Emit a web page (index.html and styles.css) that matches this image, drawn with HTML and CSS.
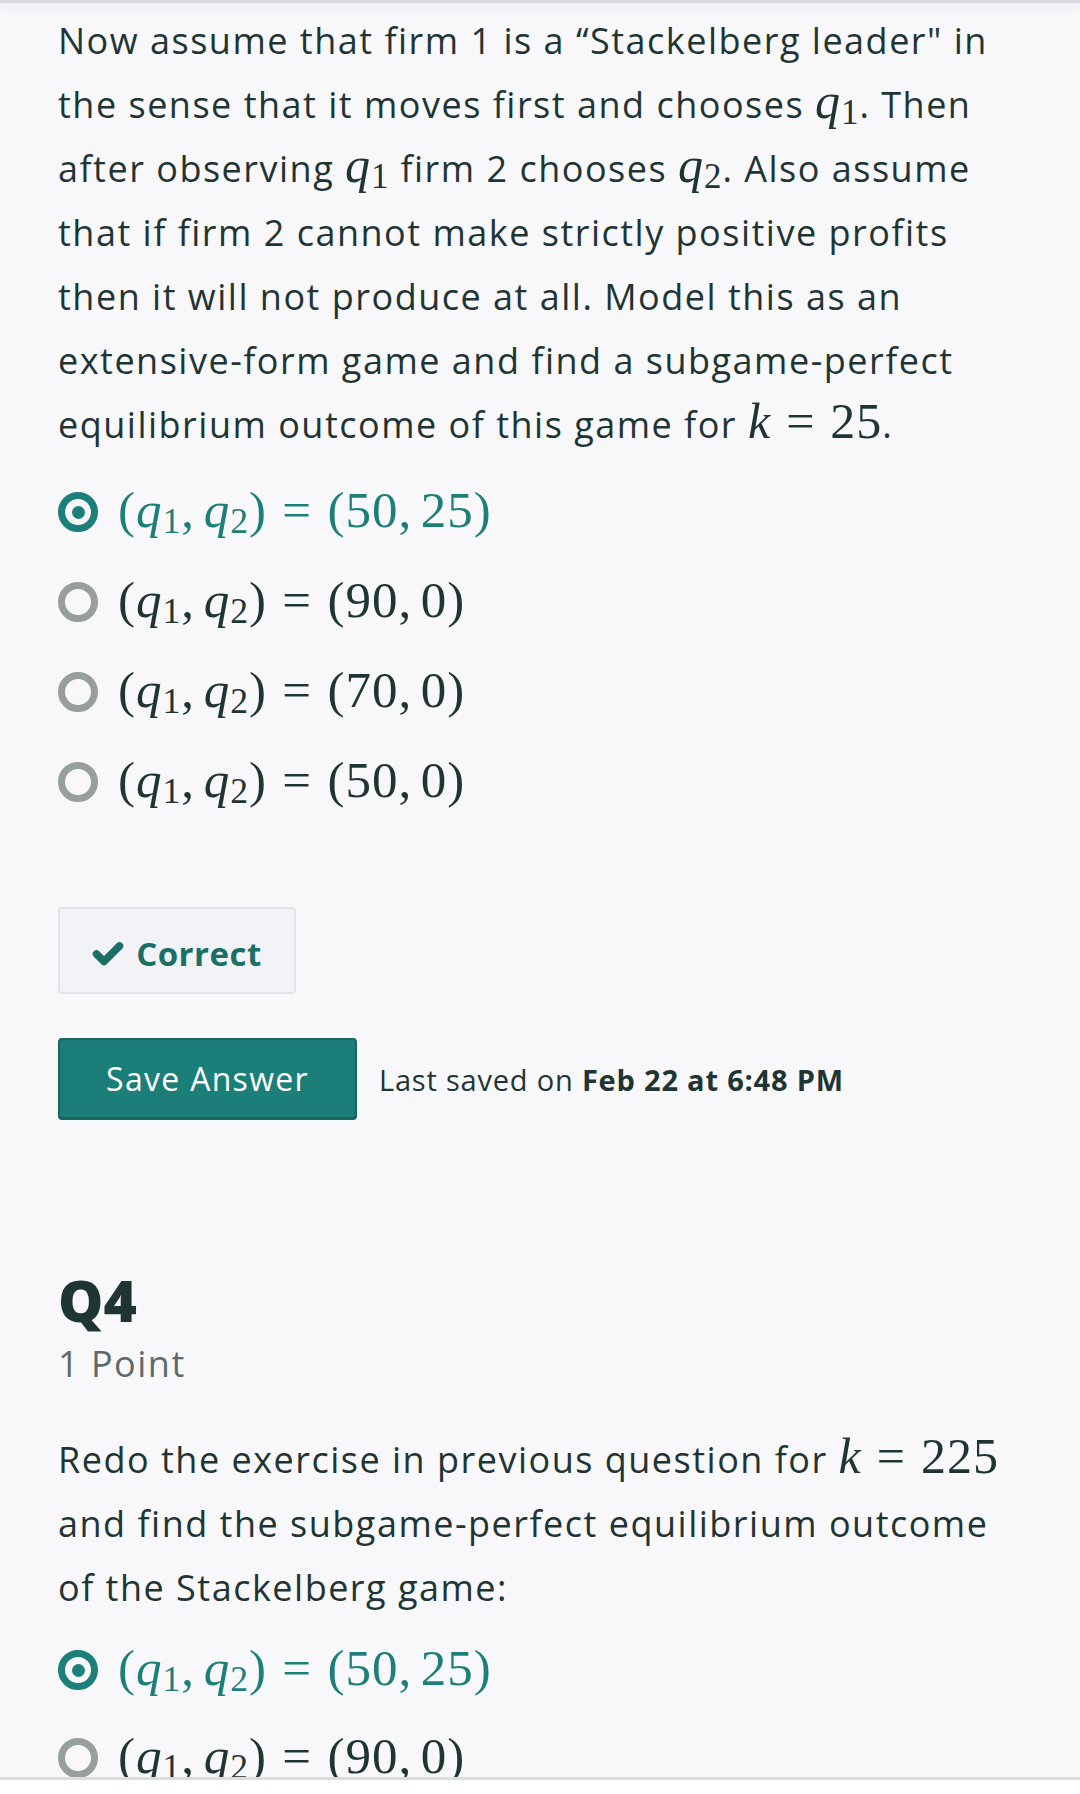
FILE: index.html
```html
<!DOCTYPE html>
<html>
<head>
<meta charset="utf-8">
<link rel="stylesheet" href="styles.css">
</head>
<body>
<div class="topbar"></div>
<main class="page">
  <p class="prompt">Now assume that firm 1 is a “Stackelberg leader" in the sense that it moves first and chooses <span class="m"><i>q</i><sub>1</sub></span>. Then after observing <span class="m"><i>q</i><sub>1</sub></span> firm 2 chooses <span class="m"><i>q</i><sub>2</sub></span>. Also assume that if firm 2 cannot make strictly positive profits then it will not produce at all. Model this as an extensive-form game and find a subgame-perfect equilibrium outcome of this game for <span class="m"><i>k</i><span class="eq">=</span>25</span>.</p>

  <ul class="options first">
    <li class="option selected"><span class="radio"></span><span class="m">(<i>q</i><sub>1</sub>,<span class="th"></span><i>q</i><sub>2</sub>)<span class="eq">=</span>(50,<span class="th"></span>25)</span></li>
    <li class="option"><span class="radio"></span><span class="m">(<i>q</i><sub>1</sub>,<span class="th"></span><i>q</i><sub>2</sub>)<span class="eq">=</span>(90,<span class="th"></span>0)</span></li>
    <li class="option"><span class="radio"></span><span class="m">(<i>q</i><sub>1</sub>,<span class="th"></span><i>q</i><sub>2</sub>)<span class="eq">=</span>(70,<span class="th"></span>0)</span></li>
    <li class="option"><span class="radio"></span><span class="m">(<i>q</i><sub>1</sub>,<span class="th"></span><i>q</i><sub>2</sub>)<span class="eq">=</span>(50,<span class="th"></span>0)</span></li>
  </ul>

  <div class="result">
    <svg class="check" viewBox="0 0 32 26" width="32" height="26"><polyline points="4.5,13 12,20.5 27.5,5" fill="none" stroke="currentColor" stroke-width="7.5" stroke-linecap="round" stroke-linejoin="round"/></svg>
    <span>Correct</span>
  </div>

  <div class="save-row">
    <button class="save">Save Answer</button>
    <span class="saved">Last saved on <b>Feb 22 at 6:48 PM</b></span>
  </div>

  <section class="question">
    <h2 class="qtitle">Q4</h2>
    <div class="points">1 Point</div>
    <p class="prompt">Redo the exercise in previous question for <span class="m"><i>k</i><span class="eq">=</span>225</span> and find the subgame-perfect equilibrium outcome of the Stackelberg game:</p>
    <ul class="options second">
      <li class="option selected"><span class="radio"></span><span class="m">(<i>q</i><sub>1</sub>,<span class="th"></span><i>q</i><sub>2</sub>)<span class="eq">=</span>(50,<span class="th"></span>25)</span></li>
      <li class="option"><span class="radio"></span><span class="m">(<i>q</i><sub>1</sub>,<span class="th"></span><i>q</i><sub>2</sub>)<span class="eq">=</span>(90,<span class="th"></span>0)</span></li>
    </ul>
  </section>
</main>
<div class="bottombar"></div>
</body>
</html>
```

FILE: styles.css
```css
html, body {
  margin: 0;
  padding: 0;
  background: #f8f8fb;
}
body {
  font-family: "Open Sans", Lato, sans-serif;
  color: #1f3533;
  height: 1794px;
  overflow: hidden;
  letter-spacing: 1.5px;
}
.topbar {
  height: 3px;
  background: #d6d9df;
  box-shadow: 0 3px 10px rgba(60, 70, 90, 0.18);
}
.page {
  padding: 6px 58px 0 58px;
}
.prompt {
  margin: 0;
  font-size: 36px;
  line-height: 64px;
}
.m {
  font-family: "Liberation Serif", "DejaVu Serif", serif;
  font-size: 50px;
  line-height: 1;
  white-space: nowrap;
  letter-spacing: 1px;
}
.m i {
  font-style: italic;
}
.m sub {
  font-size: 0.7em;
  vertical-align: -0.17em;
  line-height: 1;
  font-style: normal;
}
.m .eq {
  margin: 0 0.3em;
}
.m .th {
  display: inline-block;
  width: 0.17em;
}
.options {
  list-style: none;
  margin: 10px 0 0;
  padding: 0;
}
.options.second {
  margin-top: 6px;
}
.option {
  height: 90px;
  display: flex;
  align-items: center;
  gap: 20px;
}
.options.second .option {
  height: 88px;
}
.option .m {
  font-size: 51px;
}
.option.selected {
  color: #1c7f79;
}
.radio {
  width: 40px;
  height: 40px;
  box-sizing: border-box;
  border: 7px solid #969e9e;
  border-radius: 50%;
  flex: none;
  display: flex;
  align-items: center;
  justify-content: center;
}
.selected .radio {
  border-color: #1c7f79;
}
.selected .radio::after {
  content: "";
  width: 13px;
  height: 13px;
  border-radius: 50%;
  background: #1c7f79;
}
.result {
  margin-top: 80px;
  width: 238px;
  height: 87px;
  box-sizing: border-box;
  background: #f2f3f7;
  border: 2px solid #e2e4ea;
  border-radius: 4px;
  display: flex;
  align-items: center;
  justify-content: center;
  gap: 12px;
  padding-top: 6px;
  color: #1b6f66;
  font-weight: 700;
  font-size: 33px;
  letter-spacing: 0.5px;
}
.check {
  flex: none;
}
.save-row {
  margin-top: 44px;
  display: flex;
  align-items: center;
  gap: 22px;
}
.save {
  width: 299px;
  height: 82px;
  box-sizing: border-box;
  background: #1c7e79;
  border: 2px solid #196660;
  border-bottom-width: 3px;
  border-radius: 4px;
  color: #ffffff;
  font-family: inherit;
  font-size: 32px;
  letter-spacing: 1.3px;
  padding: 0;
}
.saved {
  font-size: 29px;
  letter-spacing: 0.8px;
}
.saved b {
  font-weight: 700;
}
.question {
  margin-top: 145px;
}
.qtitle {
  margin: 0;
  font-size: 57px;
  font-weight: 800;
  line-height: 71px;
  letter-spacing: 0;
}
.points {
  margin-top: 3px;
  font-size: 36px;
  line-height: 50px;
  color: #5e6a69;
  margin-bottom: 39px;
}
.bottombar {
  position: fixed;
  left: 0;
  right: 0;
  bottom: 0;
  height: 14px;
  background: #ffffff;
  border-top: 3px solid #dcdcdc;
}
```
